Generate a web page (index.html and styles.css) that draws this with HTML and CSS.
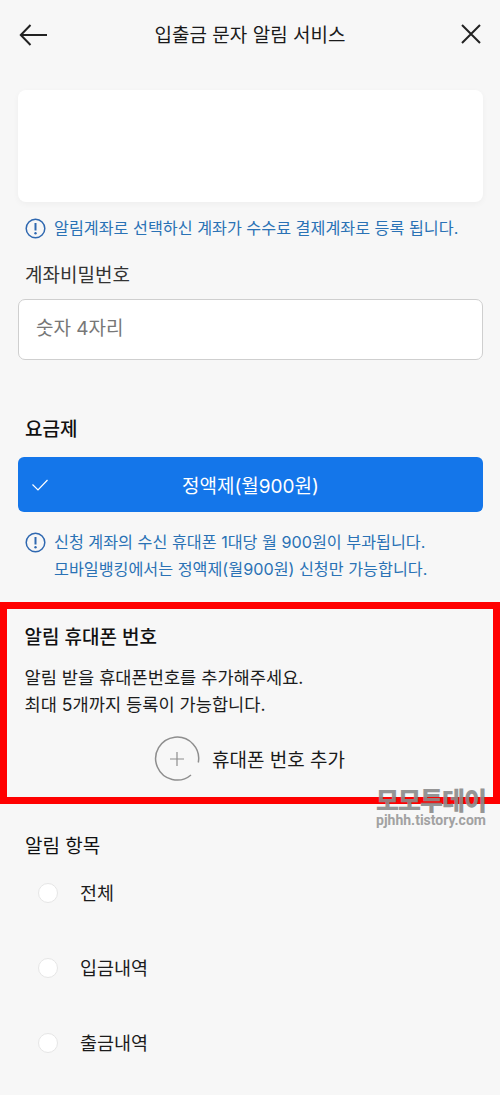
FILE: index.html
```html
<!DOCTYPE html>
<html lang="ko">
<head>
<meta charset="utf-8">
<title>입출금 문자 알림 서비스</title>
<link rel="stylesheet" href="styles.css">
</head>
<body>
<div class="page">
  <header class="topbar">
    <svg class="icon-back" width="30" height="24" viewBox="0 0 30 24"><path d="M28 12H2M11.500 2 1.800 12l9.700 10" fill="none" stroke="#222" stroke-width="2"/></svg>
    <h1 class="title">입출금 문자 알림 서비스</h1>
    <svg class="icon-close" width="22" height="22" viewBox="0 0 22 22"><path d="M2 2l18 18M20 2 2 20" fill="none" stroke="#222" stroke-width="2"/></svg>
  </header>

  <div class="card"></div>

  <div class="notice notice-first">
    <svg class="icon-info" width="21" height="21" viewBox="0 0 21 21"><circle cx="10.500" cy="10.500" r="9.300" fill="none" stroke="#2f68b0" stroke-width="1.500"/><path d="M10.500 5v7.500" stroke="#2f68b0" stroke-width="2"/><circle cx="10.500" cy="15.300" r="1.200" fill="#2f68b0"/></svg>
    <p class="notice-text">알림계좌로 선택하신 계좌가 수수료 결제계좌로 등록 됩니다.</p>
  </div>

  <div class="label label-pw">계좌비밀번호</div>
  <div class="input">숫자 4자리</div>

  <div class="label label-plan">요금제</div>
  <div class="plan">
    <svg class="icon-check" width="18" height="14" viewBox="0 0 18 14"><path d="M1.500 6.500 7 12 16.500 2" fill="none" stroke="#fff" stroke-width="1.200"/></svg>
    <span>정액제(월900원)</span>
  </div>

  <div class="notice notice-plan">
    <svg class="icon-info icon-info-plan" width="21" height="21" viewBox="0 0 21 21"><circle cx="10.500" cy="10.500" r="9.300" fill="none" stroke="#2f68b0" stroke-width="1.500"/><path d="M10.500 5v7.500" stroke="#2f68b0" stroke-width="2"/><circle cx="10.500" cy="15.300" r="1.200" fill="#2f68b0"/></svg>
    <p class="notice-text">신청 계좌의 수신 휴대폰 1대당 월 900원이 부과됩니다.<br>모바일뱅킹에서는 정액제(월900원) 신청만 가능합니다.</p>
  </div>

  <section class="phones">
    <h2 class="phones-title">알림 휴대폰 번호</h2>
    <p class="phones-desc">알림 받을 휴대폰번호를 추가해주세요.<br>최대 5개까지 등록이 가능합니다.</p>
    <div class="add">
      <svg class="icon-add" width="46" height="46" viewBox="0 0 46 46"><path d="M37 39A21.500 21.500 0 1 1 44.300 26.500" fill="none" stroke="#8e8e8e" stroke-width="1.500"/><path d="M23 16v14M16 23h14" stroke="#8e8e8e" stroke-width="1.200"/></svg>
      <span class="add-text">휴대폰 번호 추가</span>
    </div>
  </section>

  <div class="label label-items">알림 항목</div>
  <ul class="items">
    <li class="item"><i class="radio"></i><span class="item-text">전체</span></li>
    <li class="item"><i class="radio"></i><span class="item-text">입금내역</span></li>
    <li class="item"><i class="radio"></i><span class="item-text">출금내역</span></li>
  </ul>

  <div class="watermark">
    <div class="wm-top">모모투데이</div>
    <div class="wm-bottom">pjhhh.tistory.com</div>
  </div>
</div>
</body>
</html>
```
FILE: styles.css
```css
* { box-sizing: border-box; margin: 0; padding: 0; }
html, body { width: 500px; height: 1095px; overflow: hidden; }
body { background: #f7f7f7; font-family: "Inter", "Noto Sans CJK KR", "Noto Sans", sans-serif; color: #1c1c1c; }
.page { position: relative; height: 1095px; display: flex; flex-direction: column; }

.topbar { height: 70px; flex: none; display: flex; align-items: center; justify-content: space-between; padding: 0 18px 0 19px; position: relative; }
.title { position: absolute; left: 0; right: 0; top: 0; text-align: center; font-size: 19px; font-weight: 400; line-height: 72px; color: #1a1a1a; }
.icon-close { margin-top: -2px; }
.icon-back { margin-top: -1px; }

.card { height: 112px; margin: 20px 17px 0 18px; background: #fff; border-radius: 8px; flex: none; box-shadow: 0 2px 6px rgba(0,0,0,.04); }

.notice { display: flex; gap: 8px; margin-left: 25px; flex: none; }
.notice-first { margin-top: 13px; }
.notice-plan { margin-top: 17px; }
.notice-text { font-size: 16.200px; line-height: 27px; color: #2a72b5; white-space: nowrap; }
.icon-info { flex: none; margin-top: 3px; }

.label { font-size: 19px; line-height: 24px; margin-left: 25px; flex: none; color: #1c1c1c; }
.label-pw { margin-top: 22px; color: #333; }
.label-plan { margin-top: 58px; font-weight: 500; color: #111; }
.label-items { margin-top: 33px; line-height: 20px; color: #111; }

.input { height: 61px; margin: 11px 17px 0 18px; background: #fff; border: 1px solid #cfcfcf; border-radius: 7px; padding-left: 17px; font-size: 19px; line-height: 57px; color: #777; flex: none; }

.plan { height: 55px; margin: 15px 17px 0 18px; background: #1476ea; border-radius: 6px; color: #fff; font-size: 19px; position: relative; display: flex; align-items: center; justify-content: center; flex: none; }
.icon-check { position: absolute; left: 13px; top: 21px; }

.phones { margin-top: 19px; height: 202px; border: 7.500px solid #ff0000; padding: 16.500px 0 0 17.500px; flex: none; }
.phones-title { font-size: 19px; font-weight: 500; line-height: 24px; color: #111; }
.phones-desc { font-size: 17.600px; line-height: 27px; margin-top: 14.500px; color: #1c1c1c; }
.add { display: flex; align-items: center; justify-content: center; gap: 12px; margin-top: 18px; margin-left: -17.500px; font-size: 19px; color: #1a1a1a; padding-right: 1px; }
.add-text { margin-top: -2px; }
.icon-add { flex: none; }

.items { list-style: none; flex: none; margin-top: -2px; }
.item { height: 75px; display: flex; align-items: center; padding-left: 38px; font-size: 18.500px; color: #1c1c1c; }
.item-text { margin-top: -2px; }
.radio { width: 20px; height: 20px; background: #fff; border: 1px solid #e6e6e6; border-radius: 50%; margin-right: 22px; flex: none; }

.watermark { position: absolute; left: 376px; top: 789px; width: 110px; display: flex; flex-direction: column; align-items: center; color: #8b8b8b; opacity: .9; }
.wm-top { font-size: 25px; font-weight: 900; line-height: 24px; white-space: nowrap; letter-spacing: -1px; }
.wm-bottom { font-family: "Roboto", sans-serif; font-size: 14px; font-weight: 700; line-height: 16px; margin-top: -1px; white-space: nowrap; color: #999; }
```
